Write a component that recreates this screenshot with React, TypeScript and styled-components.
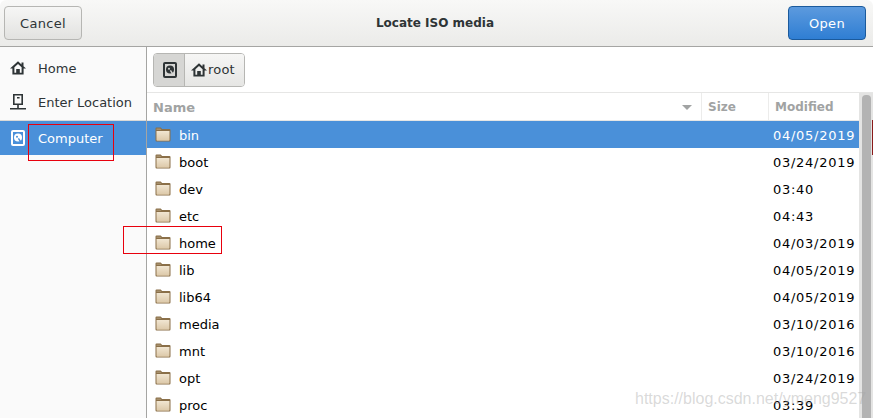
import React from "react";
import styled, { createGlobalStyle } from "styled-components";

const GlobalStyle = createGlobalStyle`
    html, body {
        margin: 0;
        padding: 0;
        background: #fff;
    }
    body {
        font-family: "DejaVu Sans", sans-serif;
        font-size: 13px;
        color: #2e3436;
    }
`;

const Dialog = styled.div`
    position: relative;
    width: 873px;
    height: 418px;
    overflow: hidden;
    background: #fff;
    display: flex;
    flex-direction: column;
`;

const Header = styled.header`
    height: 46px;
    flex: none;
    display: flex;
    align-items: center;
    justify-content: space-between;
    padding: 0 7px 0 4px;
    background: linear-gradient(#f8f8f7, #ebebe9);
    border-bottom: 1px solid #a5a5a3;
    border-radius: 6px 6px 0 0;
`;

const Title = styled.h1`
    margin: 0;
    font-size: 12px;
    font-weight: bold;
    color: #2e3436;
`;

const HeaderButton = styled.button<{ $primary?: boolean }>`
    width: 78px;
    height: 34px;
    font: 13px "DejaVu Sans", sans-serif;
    letter-spacing: 0.3px;
    padding: 0;
    border-radius: 4px;
    border: 1px solid ${(p) => (p.$primary ? "#1b5a9c" : "#b6b6b3")};
    color: ${(p) => (p.$primary ? "#fff" : "#2e3436")};
    background: ${(p) =>
        p.$primary
            ? "linear-gradient(#5c9ade, #2f7ed3)"
            : "linear-gradient(#f6f6f5, #e2e2e0)"};
`;

const Body = styled.div`
    flex: 1;
    display: flex;
    min-height: 0;
`;

const Sidebar = styled.nav`
    width: 146px;
    flex: none;
    background: #fafafa;
    border-right: 1px solid #a5a5a3;
    padding-top: 4px;
`;

const Place = styled.div<{ $active?: boolean }>`
    height: 34px;
    display: flex;
    align-items: center;
    gap: 12px;
    padding-left: 10px;
    color: ${(p) => (p.$active ? "#fff" : "#2e3436")};
    background: ${(p) => (p.$active ? "#4a90d9" : "transparent")};
`;

const PlaceRule = styled.div`
    height: 1px;
    margin-top: 1px;
    background: #d9d9d7;
`;

const PlaceIcon = styled.span`
    width: 16px;
    display: flex;
    justify-content: center;
`;

const Main = styled.main`
    flex: 1;
    min-width: 0;
    display: flex;
    flex-direction: column;
`;

const PathBar = styled.div`
    height: 46px;
    flex: none;
    display: flex;
    align-items: center;
    padding: 0 6px;
    box-sizing: border-box;
    border-bottom: 1px solid #e6e6e5;
`;

const PathGroup = styled.div`
    display: flex;
    height: 34px;
    box-sizing: border-box;
    border: 1px solid #b6b6b3;
    border-radius: 4px;
    overflow: hidden;
`;

const PathButton = styled.div<{ $pressed?: boolean }>`
    display: flex;
    align-items: center;
    gap: 1px;
    padding: ${(p) => (p.$pressed ? "0 7px 0 9px" : "0 9px 0 6px")};
    letter-spacing: 0.2px;
    background: ${(p) =>
        p.$pressed ? "#d6d6d4" : "linear-gradient(#f6f6f5, #e6e6e4)"};
    border-right: ${(p) => (p.$pressed ? "1px solid #b6b6b3" : "none")};
`;

const ListArea = styled.div`
    flex: 1;
    min-height: 0;
    display: flex;
`;

const Table = styled.div`
    flex: 1;
    min-width: 0;
`;

const columns = "1fr 67px 91px";

const HeadRow = styled.div`
    display: grid;
    grid-template-columns: ${columns};
    height: 28px;
    box-sizing: border-box;
    border-bottom: 1px solid #e6e6e5;
`;

const HeadCell = styled.div<{ $small?: boolean }>`
    display: flex;
    align-items: center;
    justify-content: space-between;
    padding: 1px 9px 0 6px;
    font-weight: bold;
    font-size: ${(p) => (p.$small ? "12px" : "13px")};
    color: #a1a3a3;
    border-left: 1px solid #ececeb;
    &:first-child {
        border-left: none;
    }
`;

const Row = styled.div<{ $selected?: boolean }>`
    display: grid;
    grid-template-columns: ${columns};
    height: 27px;
    align-items: center;
    color: ${(p) => (p.$selected ? "#fff" : "#000")};
    background: ${(p) => (p.$selected ? "#4a90d9" : "transparent")};
`;

const NameCell = styled.div`
    display: flex;
    align-items: center;
    gap: 8px;
    padding-left: 8px;
`;

const FileName = styled.span`
    padding-top: 2px;
`;

const DateCell = styled.div`
    grid-column: 3;
    padding-left: 5px;
    padding-top: 1px;
    letter-spacing: 0.72px;
    white-space: nowrap;
`;

const Scrollbar = styled.div`
    width: 14px;
    flex: none;
    background: #e4e4e3;
    padding: 2px 2px 0 3px;
    box-sizing: border-box;
`;

const Thumb = styled.div`
    height: 100%;
    background: #b3b3b3;
    border-radius: 4px 4px 0 0;
`;

const Annotation = styled.div<{ $x: number; $y: number; $w: number; $h: number }>`
    position: absolute;
    left: ${(p) => p.$x}px;
    top: ${(p) => p.$y}px;
    width: ${(p) => p.$w}px;
    height: ${(p) => p.$h}px;
    box-sizing: border-box;
    border: 1px solid #e8000d;
    pointer-events: none;
`;

const Watermark = styled.div`
    position: absolute;
    left: 635px;
    top: 390px;
    font-family: "Liberation Sans", Arial, sans-serif;
    font-size: 16px;
    color: rgba(165, 165, 165, 0.42);
    white-space: nowrap;
`;

const EdgeMark = styled.div`
    position: absolute;
    right: 0;
    top: 120px;
    width: 1px;
    height: 35px;
    background: #8a1a1a;
`;

const HomeIcon = () => (
    <svg width="16" height="14" viewBox="0 0 16 14">
        <path
            fillRule="evenodd"
            d="M8 .3 0 7.6h2.4v5.9h11.2V7.6H16l-2.5-2.3V1.5h-2v2Zm0 2.6 3.6 3.3v5.5H9.8V8H6.2v3.7H4.4V6.2Z"
            fill="#2e3436"
        />
    </svg>
);

const NetworkIcon = () => (
    <svg width="16" height="17" viewBox="0 0 16 17">
        <path
            d="M3 0h10v11H3ZM4.6 1.6v7.8h6.8V1.6ZM7 3h2.6v1.4H7ZM7.2 11h1.6v3H16v1.6H0V14h7.2Z"
            fill="#2e3436"
            fillRule="evenodd"
        />
    </svg>
);

const DiskIcon = ({ inverted }: { inverted?: boolean }) => {
    const fg = inverted ? "#fff" : "#2e3436";
    const bg = inverted ? "#4a90d9" : "#d6d6d4";
    return (
        <svg width="14" height="16" viewBox="0 0 14 16">
            <rect x="0" y="0" width="14" height="16" rx="2" fill={fg} />
            <rect x="2" y="2" width="10" height="12" fill={bg} />
            <circle cx="7" cy="7.4" r="4" fill={fg} />
            <circle cx="6" cy="6.8" r="1" fill={bg} />
            <path d="M7.4 8.4 10.4 13" stroke={bg} strokeWidth="1.4" />
        </svg>
    );
};

const FolderIcon = () => (
    <svg width="16" height="15" viewBox="0 0 16 15">
        <defs>
            <linearGradient id="folderFill" x1="0" y1="0" x2="0" y2="1">
                <stop offset="0" stopColor="#f1e6d2" />
                <stop offset="1" stopColor="#dcc8a8" />
            </linearGradient>
        </defs>
        <path
            d="M.5 13.2V1.5q0-1 1-1h4.2l1.4 1.6h7.4q1 0 1 1v10.1q0 1.3-1 1.3H1.5q-1 0-1-1.3Z"
            fill="#8a6f48"
        />
        <path d="M1.5 4h13v9q0 .7-.7.7H2.2q-.7 0-.7-.7Z" fill="url(#folderFill)" />
        <path d="M1.5 1.6h3.8l1.2 1.5h-5Z" fill="#a58f6c" />
    </svg>
);

const SortArrow = () => (
    <svg width="10" height="5" viewBox="0 0 10 5">
        <path d="M0 0h10L5 5Z" fill="#a1a3a3" />
    </svg>
);

const files = [
    { name: "bin", date: "04/05/2019" },
    { name: "boot", date: "03/24/2019" },
    { name: "dev", date: "03:40" },
    { name: "etc", date: "04:43" },
    { name: "home", date: "04/03/2019" },
    { name: "lib", date: "04/05/2019" },
    { name: "lib64", date: "04/05/2019" },
    { name: "media", date: "03/10/2016" },
    { name: "mnt", date: "03/10/2016" },
    { name: "opt", date: "03/24/2019" },
    { name: "proc", date: "03:39" },
];

export default function App() {
    return (
        <Dialog>
            <GlobalStyle />
            <Header>
                <HeaderButton>Cancel</HeaderButton>
                <Title>Locate ISO media</Title>
                <HeaderButton $primary>Open</HeaderButton>
            </Header>
            <Body>
                <Sidebar>
                    <Place>
                        <PlaceIcon>
                            <HomeIcon />
                        </PlaceIcon>
                        Home
                    </Place>
                    <Place>
                        <PlaceIcon>
                            <NetworkIcon />
                        </PlaceIcon>
                        Enter Location
                    </Place>
                    <PlaceRule />
                    <Place $active>
                        <PlaceIcon>
                            <DiskIcon inverted />
                        </PlaceIcon>
                        Computer
                    </Place>
                </Sidebar>
                <Main>
                    <PathBar>
                        <PathGroup>
                            <PathButton $pressed>
                                <DiskIcon />
                            </PathButton>
                            <PathButton>
                                <HomeIcon />
                                root
                            </PathButton>
                        </PathGroup>
                    </PathBar>
                    <ListArea>
                        <Table>
                            <HeadRow>
                                <HeadCell>
                                    Name
                                    <SortArrow />
                                </HeadCell>
                                <HeadCell $small>Size</HeadCell>
                                <HeadCell $small>Modified</HeadCell>
                            </HeadRow>
                            {files.map((file, i) => (
                                <Row key={file.name} $selected={i === 0}>
                                    <NameCell>
                                        <FolderIcon />
                                        <FileName>{file.name}</FileName>
                                    </NameCell>
                                    <DateCell>{file.date}</DateCell>
                                </Row>
                            ))}
                        </Table>
                        <Scrollbar>
                            <Thumb />
                        </Scrollbar>
                    </ListArea>
                </Main>
            </Body>
            <Annotation $x={28} $y={124} $w={86} $h={37} />
            <Annotation $x={123} $y={226} $w={99} $h={28} />
            <EdgeMark />
            <Watermark>https://blog.csdn.net/ymeng9527</Watermark>
        </Dialog>
    );
}
